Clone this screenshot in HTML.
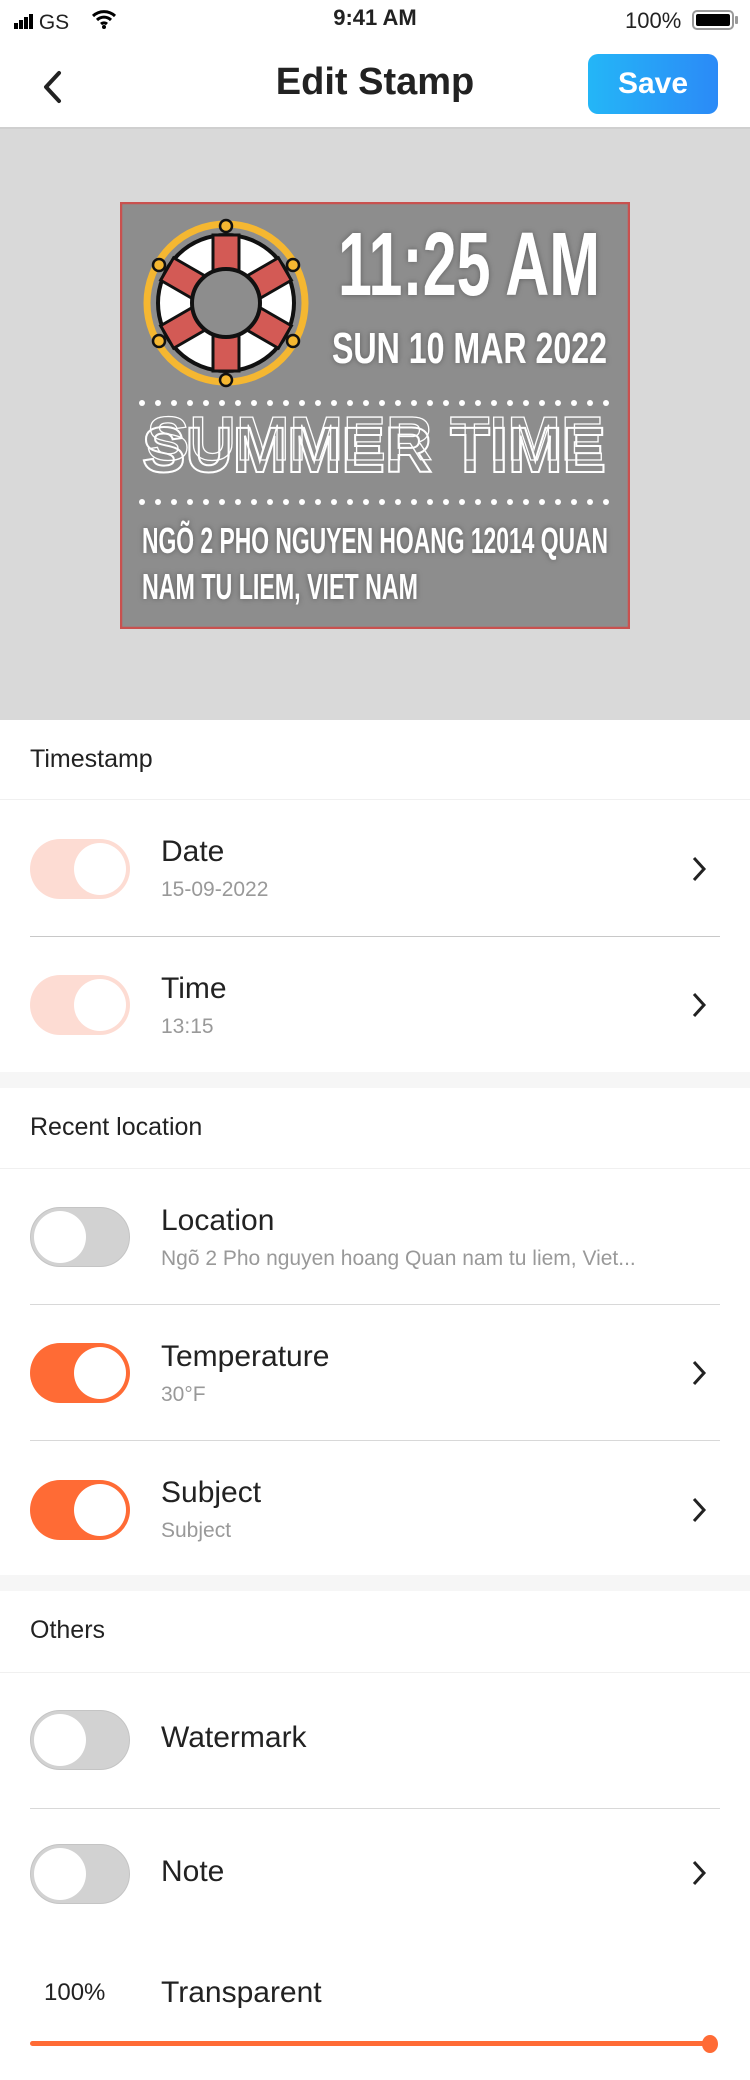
<!DOCTYPE html>
<html><head><meta charset="utf-8"><style>
*{margin:0;padding:0;box-sizing:border-box}
body{width:750px;height:2080px;background:#fff;font-family:"Liberation Sans","Noto Sans CJK SC",sans-serif;position:relative;overflow:hidden;color:#222}
.a{position:absolute}
.hdr{position:absolute;left:30px;font-size:25px;color:#222}
.ln{position:absolute;height:1px;background:#e4e4e4}
.gap{position:absolute;left:0;width:750px;height:16px;background:#f6f6f6}
.tg{position:absolute;left:30px;width:100px;height:60px;border-radius:30px}
.tg i{position:absolute;top:4px;width:52px;height:52px;border-radius:50%;background:#fff}
.on{background:#ff6b35}.on i{right:4px}
.dis{background:#fddcd3}.dis i{right:4px}
.off{background:#d2d2d2;border:1px solid #c4c4c4}.off i{left:3px;top:3px}
.t{position:absolute;left:161px;font-size:30px;color:#222}
.s{position:absolute;left:161px;font-size:21px;color:#999}
.ch{position:absolute;left:690px;width:18px;height:28px}
</style></head><body>
<div class="a" style="left:14px;top:11px;font-size:21px">
<span style="display:inline-block;width:4px;height:6px;background:#000;margin-right:1px"></span><span style="display:inline-block;width:4px;height:9px;background:#000;margin-right:1px"></span><span style="display:inline-block;width:4px;height:12px;background:#000;margin-right:1px"></span><span style="display:inline-block;width:4px;height:15px;background:#000"></span> GS</div>
<svg class="a" style="left:91px;top:9px" width="26" height="20" viewBox="0 0 26 20"><path d="M2 7a16 16 0 0 1 22 0M6 11a10 10 0 0 1 14 0M10 15a4.5 4.5 0 0 1 6 0" stroke="#000" stroke-width="3" fill="none"/><circle cx="13" cy="18" r="2" fill="#000"/></svg>
<div class="a" style="left:0;width:750px;top:5px;text-align:center;font-size:22px;font-weight:bold">9:41 AM</div>
<div class="a" style="left:625px;top:8px;font-size:22px">100%</div>
<div class="a" style="left:692px;top:10px;width:42px;height:20px;border:2px solid #999;border-radius:5px;padding:2px"><div style="width:100%;height:100%;background:#000;border-radius:2px"></div></div>
<div class="a" style="left:735px;top:16px;width:3px;height:8px;background:#999;border-radius:1px"></div>
<svg class="a" style="left:40px;top:70px" width="26" height="34" viewBox="0 0 26 34"><path d="M19 3L6 17L19 31" stroke="#222" stroke-width="4" fill="none" stroke-linecap="round" stroke-linejoin="round"/></svg>
<div class="a" style="left:0;width:750px;top:61px;text-align:center;font-size:38px;font-weight:bold;color:#222">Edit Stamp</div>
<div class="a" style="left:588px;top:54px;width:130px;height:60px;border-radius:10px;background:linear-gradient(90deg,#24b6f7,#2b8af7);color:#fff;font-size:30px;font-weight:bold;text-align:center;line-height:60px">Save</div>
<div class="a" style="left:0;top:127px;width:750px;height:2px;background:#cfcfcf"></div>
<div class="a" style="left:0;top:129px;width:750px;height:591px;background:#d9d9d9"></div>
<svg class="a" style="left:120px;top:202px" width="510" height="427" viewBox="0 0 510 427">
<defs><filter id="sh"><feDropShadow dx="0" dy="0" stdDeviation="3" flood-color="#000" flood-opacity="0.35"/></filter></defs>
<rect x="1" y="1" width="508" height="425" fill="#8d8d8d" stroke="#c9514f" stroke-width="2.5"/>
<g transform="translate(106,101)">
<circle r="79" fill="none" stroke="#f5b731" stroke-width="7"/>
<circle r="68" fill="#fff" stroke="#111" stroke-width="4"/>
<g fill="#d35a55" stroke="#111" stroke-width="3">
<rect x="-13" y="-68" width="26" height="36"/><rect x="-13" y="32" width="26" height="36"/>
<rect x="-13" y="-68" width="26" height="36" transform="rotate(60)"/><rect x="-13" y="32" width="26" height="36" transform="rotate(60)"/>
<rect x="-13" y="-68" width="26" height="36" transform="rotate(-60)"/><rect x="-13" y="32" width="26" height="36" transform="rotate(-60)"/>
</g>
<circle r="34" fill="#8d8d8d" stroke="#111" stroke-width="4"/>
<g fill="#f5b731" stroke="#111" stroke-width="2.5"><circle cx="0" cy="-77" r="6"/><circle cx="0" cy="77" r="6"/><circle cx="-67" cy="-38" r="6"/><circle cx="67" cy="-38" r="6"/><circle cx="-67" cy="38" r="6"/><circle cx="67" cy="38" r="6"/></g>
</g>
<g fill="#fff" font-family="Liberation Sans" font-weight="bold" filter="url(#sh)">
<text x="218" y="93" font-size="90" textLength="262" lengthAdjust="spacingAndGlyphs">11:25 AM</text>
<text x="212" y="161" font-size="44" textLength="275" lengthAdjust="spacingAndGlyphs">SUN 10 MAR 2022</text>
<text x="22" y="351" font-size="36" textLength="466" lengthAdjust="spacingAndGlyphs">NGÕ 2 PHO NGUYEN HOANG 12014 QUAN</text>
<text x="22" y="397" font-size="36" textLength="276" lengthAdjust="spacingAndGlyphs">NAM TU LIEM, VIET NAM</text>
</g>
<g fill="#fff" id="d">
<circle cx="22" cy="201" r="3"/><circle cx="38" cy="201" r="3"/><circle cx="54" cy="201" r="3"/><circle cx="70" cy="201" r="3"/><circle cx="86" cy="201" r="3"/><circle cx="102" cy="201" r="3"/><circle cx="118" cy="201" r="3"/><circle cx="134" cy="201" r="3"/><circle cx="150" cy="201" r="3"/><circle cx="166" cy="201" r="3"/><circle cx="182" cy="201" r="3"/><circle cx="198" cy="201" r="3"/><circle cx="214" cy="201" r="3"/><circle cx="230" cy="201" r="3"/><circle cx="246" cy="201" r="3"/><circle cx="262" cy="201" r="3"/><circle cx="278" cy="201" r="3"/><circle cx="294" cy="201" r="3"/><circle cx="310" cy="201" r="3"/><circle cx="326" cy="201" r="3"/><circle cx="342" cy="201" r="3"/><circle cx="358" cy="201" r="3"/><circle cx="374" cy="201" r="3"/><circle cx="390" cy="201" r="3"/><circle cx="406" cy="201" r="3"/><circle cx="422" cy="201" r="3"/><circle cx="438" cy="201" r="3"/><circle cx="454" cy="201" r="3"/><circle cx="470" cy="201" r="3"/><circle cx="486" cy="201" r="3"/>
</g>
<use href="#d" y="99"/>
<g font-family="Liberation Sans" font-weight="bold" fill="none" stroke="#fff" font-size="64">
<text x="22" y="270" stroke-width="2" textLength="464" lengthAdjust="spacingAndGlyphs">SUMMER TIME</text>
<text x="22" y="270" stroke-width="1.3" textLength="464" lengthAdjust="spacingAndGlyphs" transform="translate(5,-4) scale(0.985 0.97)">SUMMER TIME</text>
</g>
</svg>
<div class="hdr" style="top:745px">Timestamp</div>
<div class="ln" style="left:0;width:750px;top:799px;background:#f0f0f0"></div>
<div class="tg dis" style="top:839px"><i></i></div>
<div class="t" style="top:835px">Date</div><div class="s" style="top:878px">15-09-2022</div>
<svg class="ch" style="top:855px" viewBox="0 0 18 28"><path d="M4 3L14 14L4 25" stroke="#222" stroke-width="3" fill="none"/></svg>
<div class="ln" style="left:30px;width:690px;top:936px;background:#c8c8c8"></div>
<div class="tg dis" style="top:975px"><i></i></div>
<div class="t" style="top:972px">Time</div><div class="s" style="top:1015px">13:15</div>
<svg class="ch" style="top:991px" viewBox="0 0 18 28"><path d="M4 3L14 14L4 25" stroke="#222" stroke-width="3" fill="none"/></svg>
<div class="gap" style="top:1072px"></div>
<div class="hdr" style="top:1113px">Recent location</div>
<div class="ln" style="left:0;width:750px;top:1168px;background:#f0f0f0"></div>
<div class="tg off" style="top:1207px"><i></i></div>
<div class="t" style="top:1204px">Location</div><div class="s" style="top:1247px">Ngõ 2 Pho nguyen hoang Quan nam tu liem, Viet...</div>
<div class="ln" style="left:30px;width:690px;top:1304px;background:#d8d8d8"></div>
<div class="tg on" style="top:1343px"><i></i></div>
<div class="t" style="top:1340px">Temperature</div><div class="s" style="top:1383px">30°F</div>
<svg class="ch" style="top:1359px" viewBox="0 0 18 28"><path d="M4 3L14 14L4 25" stroke="#222" stroke-width="3" fill="none"/></svg>
<div class="ln" style="left:30px;width:690px;top:1440px;background:#d8d8d8"></div>
<div class="tg on" style="top:1480px"><i></i></div>
<div class="t" style="top:1476px">Subject</div><div class="s" style="top:1519px">Subject</div>
<svg class="ch" style="top:1496px" viewBox="0 0 18 28"><path d="M4 3L14 14L4 25" stroke="#222" stroke-width="3" fill="none"/></svg>
<div class="gap" style="top:1575px"></div>
<div class="hdr" style="top:1616px">Others</div>
<div class="ln" style="left:0;width:750px;top:1672px;background:#f0f0f0"></div>
<div class="tg off" style="top:1710px"><i></i></div>
<div class="t" style="top:1721px">Watermark</div>
<div class="ln" style="left:30px;width:690px;top:1808px;background:#d8d8d8"></div>
<div class="tg off" style="top:1844px"><i></i></div>
<div class="t" style="top:1855px">Note</div>
<svg class="ch" style="top:1859px" viewBox="0 0 18 28"><path d="M4 3L14 14L4 25" stroke="#222" stroke-width="3" fill="none"/></svg>
<div class="a" style="left:44px;top:1979px;font-size:24px;color:#222">100%</div>
<div class="t" style="top:1976px">Transparent</div>
<div class="a" style="left:30px;top:2041px;width:682px;height:5px;background:#ff6b35;border-radius:3px"></div>
<div class="a" style="left:702px;top:2035px;width:16px;height:18px;border-radius:50%;background:#ff6b35"></div>
</body></html>
